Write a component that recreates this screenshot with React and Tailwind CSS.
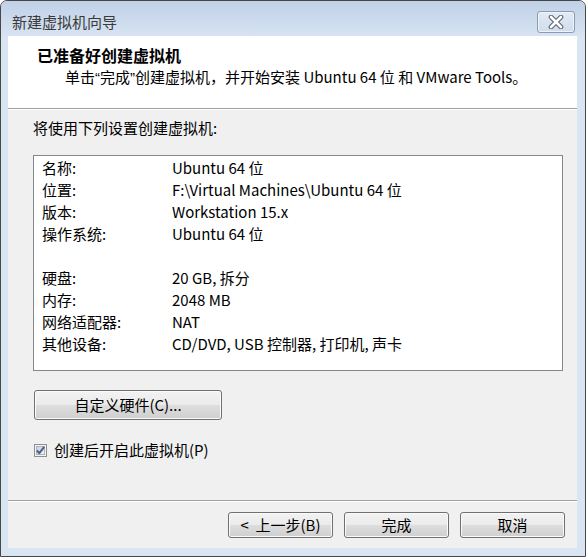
import React from 'react';

const rows = [
  ['名称:', 'Ubuntu 64 位'],
  ['位置:', 'F:\\Virtual Machines\\Ubuntu 64 位'],
  ['版本:', 'Workstation 15.x'],
  ['操作系统:', 'Ubuntu 64 位'],
  null,
  ['硬盘:', '20 GB, 拆分'],
  ['内存:', '2048 MB'],
  ['网络适配器:', 'NAT'],
  ['其他设备:', 'CD/DVD, USB 控制器, 打印机, 声卡'],
];

// Win7 风格按钮
function WinButton({ children, className = '' }) {
  return (
    <button
      className={`flex items-center justify-center rounded-[3px] border border-[#707070] bg-[linear-gradient(#f2f2f2,#ebebeb_48%,#dddddd_52%,#cfcfcf)] shadow-[inset_0_0_0_1px_#fbfbfb] text-[15px] leading-[20px] text-black whitespace-pre ${className}`}
    >
      {children}
    </button>
  );
}

function CloseIcon() {
  return (
    <svg width="16" height="14" viewBox="0 0 16 14">
      <path d="M3 2 L13 12 M13 2 L3 12" stroke="#5a6270" strokeWidth="4.6" strokeLinecap="round" />
      <path d="M3 2 L13 12 M13 2 L3 12" stroke="#ffffff" strokeWidth="2.6" strokeLinecap="round" />
    </svg>
  );
}

function CheckBox() {
  return (
    <svg width="13" height="13" viewBox="0 0 13 13">
      <defs>
        <linearGradient id="cbg" x1="0" y1="0" x2="1" y2="1">
          <stop offset="0" stopColor="#cbcfd5" />
          <stop offset="1" stopColor="#f6f6f6" />
        </linearGradient>
      </defs>
      <rect x="0.5" y="0.5" width="12" height="12" fill="#f4f4f4" stroke="#8e8f8f" />
      <rect x="2.5" y="2.5" width="8" height="8" fill="url(#cbg)" stroke="#aeb3b9" />
      <path d="M3 6.5 L5.3 9.2 L10.2 2.8" fill="none" stroke="#4a5f97" strokeWidth="2" strokeLinejoin="round" />
    </svg>
  );
}

const Q = ({ children }) => (
  <span style={{ fontFamily: '"Liberation Sans", sans-serif' }}>{children}</span>
);

export default function App() {
  return (
    <div
      className="w-[586px] h-[557px] bg-white"
      style={{ fontFamily: '"Noto Sans CJK SC", "Noto Sans", sans-serif' }}
    >
      <div className="w-full h-full rounded-t-[7px] border border-[#474747] bg-[#d9e5f3] flex flex-col overflow-hidden">
        {/* 标题栏 */}
        <div className="h-[35px] flex items-start bg-[linear-gradient(#c0d1e7,#d7e3f2)]">
          <span className="ml-[11px] mt-[11px] text-[15px] leading-[20px] text-[#3a3a3a]">新建虚拟机向导</span>
          <div className="ml-auto mr-[10px] mt-[10px] w-[38px] h-[22px] rounded-[3px] border border-[#8b9bb4] bg-[linear-gradient(#e3ebf5,#cfdcec)] shadow-[inset_0_0_0_1px_#eef3fa] flex items-center justify-center">
            <CloseIcon />
          </div>
        </div>

        {/* 客户区 */}
        <div className="ml-[7px] mr-[8px] h-[512px] bg-[#f0f0f0] flex flex-col">
          <div className="h-[72px] bg-white flex flex-col pl-[29px] pt-[9px]">
            <div className="text-[16px] leading-[20px] font-bold text-black">已准备好创建虚拟机</div>
            <div className="mt-[2px] ml-[28px] text-[15px] leading-[20px] text-black whitespace-nowrap">
              单击<Q>“</Q>完成<Q>”</Q>创建虚拟机，并开始安装 Ubuntu 64 位 和 VMware Tools。
            </div>
          </div>
          <div className="h-px bg-[#a0a0a0]" />
          <div className="h-px bg-white" />

          <div className="pl-[25px] flex flex-col">
            <div className="mt-[8px] text-[15px] leading-[20px] text-black">将使用下列设置创建虚拟机:</div>
            <div className="mt-[17px] w-[530px] h-[216px] border border-[#828790] bg-white pt-[1px] pl-[8px]">
              {rows.map((r, i) =>
                r ? (
                  <div key={i} className="flex h-[22px] items-center text-[15px] text-black">
                    <span className="w-[130px] shrink-0">{r[0]}</span>
                    <span className="whitespace-nowrap">{r[1]}</span>
                  </div>
                ) : (
                  <div key={i} className="h-[22px]" />
                )
              )}
            </div>
            <WinButton className="mt-[19px] ml-[1px] w-[188px] h-[30px]">自定义硬件(C)...</WinButton>
            <div className="mt-[20px] ml-[1px] h-[20px] flex items-center">
              <CheckBox />
              <span className="ml-[7px] text-[15px] leading-[20px] text-black">创建后开启此虚拟机(P)</span>
            </div>
          </div>

          <div className="mt-[40px] h-px bg-[#a0a0a0]" />
          <div className="h-px bg-white" />

          <div className="mt-[10px] pr-[12px] flex justify-end gap-[11px]">
            <WinButton className="w-[105px] h-[26px]">{'<  上一步(B)'}</WinButton>
            <WinButton className="w-[105px] h-[26px]">完成</WinButton>
            <WinButton className="w-[105px] h-[26px]">取消</WinButton>
          </div>
        </div>
      </div>
    </div>
  );
}
